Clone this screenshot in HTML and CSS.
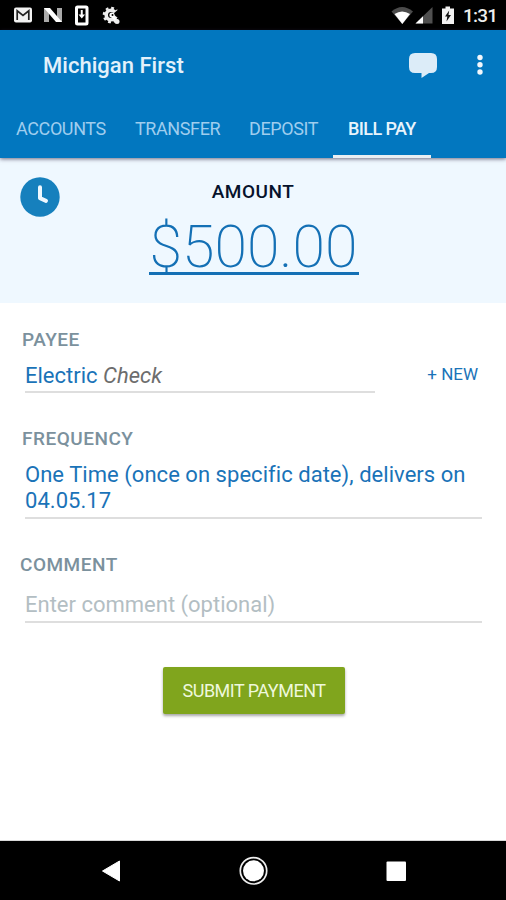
FILE: index.html
```html
<!DOCTYPE html>
<html lang="en">
<head>
<meta charset="utf-8">
<title>Michigan First</title>
<link rel="stylesheet" href="styles.css">
</head>
<body>
<div class="status">
  <svg class="notices" width="130" height="30" viewBox="0 0 130 30">
    <rect x="14" y="7.500" width="18" height="15" rx="2" fill="#f2f2f2"/>
    <path d="M17.200 20V10.800L23 15.500L28.800 10.800V20" fill="none" stroke="#222" stroke-width="1.700"/>
    <path d="M44 8h5v14h-5zM57 8h5v14h-5z" fill="#aaa"/>
    <path d="M44 8h6l12 14h-6z" fill="#fff"/>
    <rect x="76.500" y="7" width="10.500" height="17" rx="1" fill="none" stroke="#fff" stroke-width="3"/>
    <path d="M81.750 10v7" fill="none" stroke="#fff" stroke-width="2"/>
    <path d="M78.500 14.500h6.500l-3.250 4z" fill="#fff"/>
    <circle cx="111" cy="15" r="4.800" fill="none" stroke="#eee" stroke-width="3.600"/>
    <circle cx="111" cy="15" r="7.200" fill="none" stroke="#eee" stroke-width="2.200" stroke-dasharray="2.830 2.820"/>
    <path d="M113 14L121 7V18.500L118 18z" fill="#000"/>
    <path d="M111 15L117 21" stroke="#fff" stroke-width="2.800"/>
    <circle cx="112" cy="15" r="2.600" fill="#fff"/>
    <circle cx="112.500" cy="15" r="1" fill="#000"/>
    <circle cx="117" cy="21.500" r="2.500" fill="#eee"/>
  </svg>
  <svg class="signals" width="70" height="30" viewBox="390 0 70 30">
    <path d="M391.500 11.500Q402 2.500 413 11.500L402.300 24z" fill="#4b4b4b"/>
    <path d="M394.500 14Q402 9 410 14L402.300 24z" fill="#fff"/>
    <path d="M415.500 23.500L432.500 7V23.500z" fill="#505050"/>
    <path d="M415.500 23.500L423 16.200V23.500z" fill="#fff"/>
    <path d="M445.500 6.500h4.500v2h4v15.500h-12V8.500h3.500z" fill="#f2f2f2"/>
    <path d="M449.200 10.500L445 16.500h2.300L446.500 21.500L451 15h-2.500z" fill="#111"/>
  </svg>
  <span class="time">1:31</span>
</div>
<header class="header">
  <div class="bar">
    <h1 class="title">Michigan First</h1>
    <svg class="chat" width="28" height="25" viewBox="0 0 28 25"><path d="M6 0H22Q28 0 28 6V14Q28 20 22 20H20L12.500 25V20H6Q0 20 0 14V6Q0 0 6 0z" fill="#dcecf8"/></svg>
    <svg class="more" width="6" height="22" viewBox="0 0 6 22" fill="#f2f7fc"><circle cx="3" cy="3.500" r="2.700"/><circle cx="3" cy="10.800" r="2.700"/><circle cx="3" cy="18" r="2.700"/></svg>
  </div>
  <nav class="tabs">
    <a class="tab accounts">ACCOUNTS</a>
    <a class="tab transfer">TRANSFER</a>
    <a class="tab deposit">DEPOSIT</a>
    <a class="tab active">BILL PAY</a>
  </nav>
</header>
<section class="hero">
  <svg class="clock" width="40" height="40" viewBox="0 0 40 40"><circle cx="20" cy="20" r="19.700" fill="#1680bd"/><path d="M20 10.300V21.200L26 23.800" fill="none" stroke="#eff8ff" stroke-width="4" stroke-linecap="round" stroke-linejoin="round"/></svg>
  <div class="amount-label">AMOUNT</div>
  <div class="amount"><span class="amount-value">$500.00</span></div>
</section>
<main class="form">
  <div class="label payee-label">PAYEE</div>
  <div class="payee-row">
    <div class="field payee">Electric <i>Check</i></div>
    <a class="new">+ NEW</a>
  </div>
  <div class="label frequency-label">FREQUENCY</div>
  <div class="field frequency">One Time (once on specific date), delivers on<br>04.05.17</div>
  <div class="label comment-label">COMMENT</div>
  <div class="field comment">Enter comment (optional)</div>
  <button class="submit">SUBMIT PAYMENT</button>
</main>
<footer class="navbar">
  <svg width="506" height="59" viewBox="0 841 506 59">
    <path d="M102.500 871L119.500 861V881z" fill="#fff" stroke="#fff" stroke-linejoin="round"/>
    <circle cx="253.500" cy="870.800" r="13.200" fill="none" stroke="#eee" stroke-width="1.700"/>
    <circle cx="253.500" cy="870.800" r="10.500" fill="#fff"/>
    <rect x="386.500" y="861.500" width="19.500" height="19.500" rx="1" fill="#fff"/>
  </svg>
</footer>
</body>
</html>
```
FILE: styles.css
```css
* { box-sizing: border-box; }
body {
  margin: 0;
  width: 506px;
  height: 900px;
  display: flex;
  flex-direction: column;
  overflow: hidden;
  background: #fff;
  font-family: Roboto, "Liberation Sans", sans-serif;
  white-space: nowrap;
}
svg { display: block; flex: none; }
.status {
  height: 30px;
  display: flex;
  align-items: center;
  background: #000;
}
.signals { margin-left: 260px; }
.time {
  margin-left: 3px;
  color: #eee;
  font-size: 19px;
  font-weight: 500;
  line-height: 30px;
  letter-spacing: -.8px;
  padding-top: 2px;
}
.header {
  height: 128px;
  background: #0277bf;
  box-shadow: 0 1px 4px rgba(40, 30, 60, .65);
  z-index: 1;
}
.bar {
  height: 71px;
  display: flex;
  align-items: center;
  padding-left: 43px;
}
.title {
  margin: 0;
  width: 366px;
  font-size: 22px;
  font-weight: 500;
  line-height: 30px;
  letter-spacing: .03px;
  color: #e3f1fb;
}
.more { margin-left: 40px; margin-top: -1px; }
.tabs {
  height: 57px;
  display: flex;
}
.tab {
  height: 57px;
  padding: 16px 15px 0;
  font-size: 18px;
  line-height: 24px;
  letter-spacing: -.4px;
  color: #9fcdee;
}
.accounts { width: 120px; padding-left: 16px; }
.transfer { width: 114px; }
.deposit { width: 99px; }
.active {
  width: 98px;
  color: #e8f4fc;
  font-weight: 500;
  letter-spacing: -.6px;
  border-bottom: 3px solid #e9eff3;
}
.hero {
  height: 145px;
  position: relative;
  background: #eff8ff;
  padding-top: 22px;
  text-align: center;
}
.clock { position: absolute; left: 20px; top: 19px; }
.amount-label {
  font-size: 19px;
  line-height: 24px;
  font-weight: 500;
  letter-spacing: .5px;
  color: #06122c;
}
.amount {
  display: flex;
  justify-content: center;
  margin-top: 12px;
  font-size: 59px;
  line-height: 62px;
  font-weight: 200;
  color: #1470b5;
}
.amount-value {
  width: 210px;
  height: 59px;
  margin-left: 1px;
  border-bottom: 3px solid #1470b5;
}
.form {
  height: 538px;
  display: flex;
  flex-direction: column;
  padding: 25px 24px 0 25px;
}
.label {
  font-size: 19px;
  line-height: 24px;
  font-weight: 500;
  letter-spacing: .5px;
  color: #7b919d;
  margin-left: -3px;
}
.payee-row { display: flex; justify-content: space-between; }
.field {
  font-size: 22px;
  line-height: 26px;
  color: #1a73b8;
  border-bottom: 2px solid #dedede;
}
.payee {
  width: 350px;
  height: 41px;
  padding-top: 11px;
}
.payee i { color: #6d6d6d; }
.new {
  font-size: 17px;
  line-height: 24px;
  color: #1a73b8;
  padding-top: 10px;
  margin-right: 4px;
}
.frequency-label { margin-top: 34px; }
.frequency { height: 68px; padding-top: 11px; letter-spacing: .04px; }
.comment-label { margin-top: 34px; margin-left: -5px; }
.comment { height: 46px; padding-top: 15px; color: #b3bec3; }
.submit {
  width: 182px;
  height: 47px;
  margin: 44px 0 0 138px;
  padding: 0;
  border: 0;
  border-radius: 2px;
  background: #80a51d;
  box-shadow: 0 2px 3px rgba(0, 0, 0, .35);
  color: #eef8dc;
  font: 400 18px/24px Roboto, sans-serif;
  letter-spacing: -.5px;
}
.navbar {
  height: 59px;
  background: #000;
  box-shadow: 0 0 1px #222;
}
```
